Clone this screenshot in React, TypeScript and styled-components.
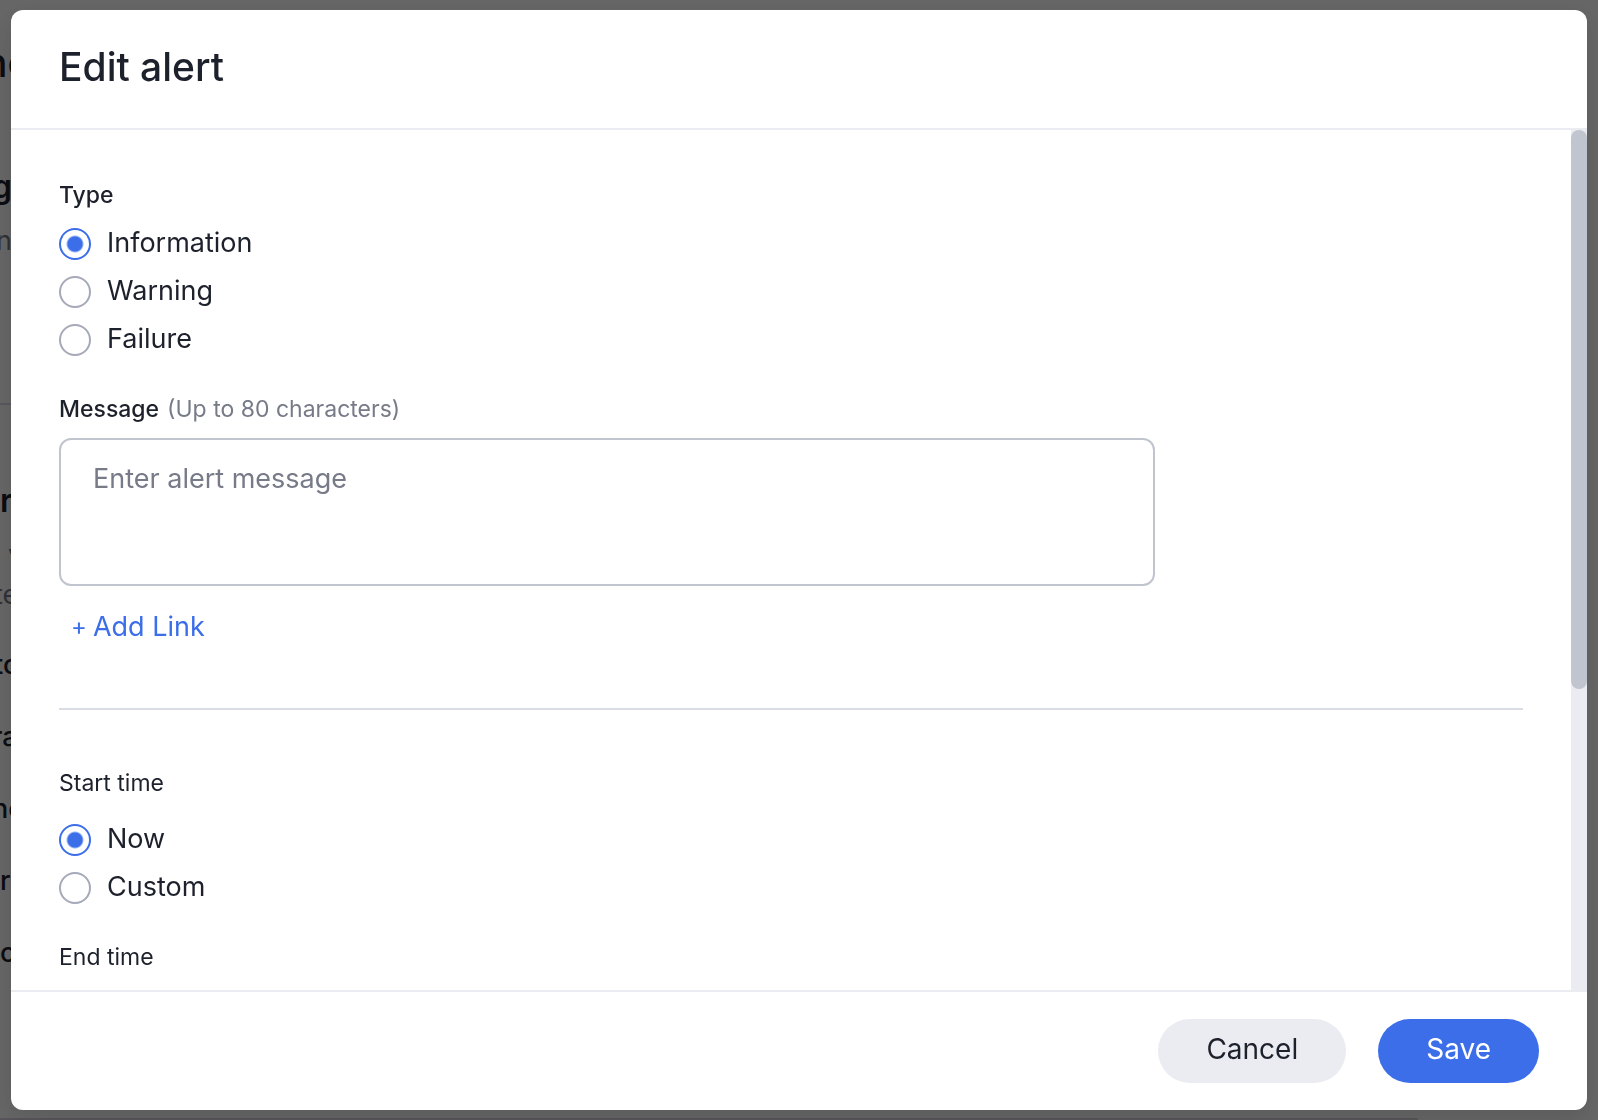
import React, { useState } from "react";
import styled, { createGlobalStyle } from "styled-components";

const ink = "#1d212c";
const muted = "#777b88";
const blue = "#3b6ee8";
const mist = "#ebecf2";

const GlobalStyle = createGlobalStyle`
  *, *::before, *::after { box-sizing: border-box; }
  body { margin: 0; overflow: hidden; }
  body, button, input, textarea {
    font-family: Inter, "Liberation Sans", sans-serif;
    color: ${ink};
  }
`;

/* ---- page behind the dialog ---- */

const Page = styled.main`
  display: flex;
  flex-direction: column;
  height: 100vh;
  overflow: hidden;
  background: #fff;
`;

const PageSection = styled.section`
  padding-top: 39px;
  padding-bottom: 142px;
`;

const RuledSection = styled.section`
  margin-right: 180px;
  padding-top: 76px;
  border-top: 2px solid #dadde6;
`;

const PageTitle = styled.div`
  font-size: 39px;
  font-weight: 500;
  line-height: 48px;
  text-indent: -16px;
  margin-bottom: 80px;
`;

const PageHeading = styled.div<{ $indent?: number }>`
  font-size: 32px;
  font-weight: 600;
  line-height: 40px;
  text-indent: ${(p) => p.$indent ?? 0}px;
  margin-bottom: 14px;
`;

const PageText = styled.div<{ $indent?: number }>`
  font-size: 27px;
  line-height: 40px;
  color: ${muted};
  text-indent: ${(p) => p.$indent ?? 0}px;
`;

const PageList = styled.div`
  padding-top: 14px;
`;

const PageItem = styled.div<{ $indent?: number }>`
  font-size: 27px;
  font-weight: 500;
  line-height: 72px;
  text-indent: ${(p) => p.$indent ?? 0}px;
`;

const PageFooter = styled.div`
  height: 2px;
  margin-top: auto;
  margin-right: 180px;
  background: #d9d4de;
`;

/* ---- dialog ---- */

const Overlay = styled.div`
  position: fixed;
  inset: 0;
  display: flex;
  padding: 10px 11px;
  background: rgba(0, 0, 0, 0.6);
`;

const Dialog = styled.form`
  flex: 1;
  min-width: 0;
  display: flex;
  flex-direction: column;
  overflow: hidden;
  border-radius: 12px;
  background: #fff;
  box-shadow: 0 8px 24px rgba(0, 0, 0, 0.12);
`;

const Header = styled.header`
  padding: 33px 48px 37px;
  border-bottom: 2px solid ${mist};
`;

const Title = styled.h1`
  margin: 0;
  font-size: 39px;
  font-weight: 500;
  line-height: 48px;
`;

const Body = styled.div`
  flex: 1;
  min-height: 0;
  display: flex;
`;

const Content = styled.div`
  flex: 1;
  min-width: 0;
  overflow-y: auto;
  scrollbar-width: none;
  padding: 48px;
`;

const Track = styled.div`
  width: 16px;
  background: ${mist};
`;

const Thumb = styled.div`
  height: 65%;
  border-radius: 8px;
  background: #c1c5cf;
`;

const Group = styled.fieldset<{ $gap: number }>`
  display: flex;
  flex-direction: column;
  gap: 16px;
  margin: 0 0 36px;
  padding: 0;
  border: 0;
  min-width: 0;

  legend {
    margin-bottom: ${(p) => p.$gap}px;
  }
`;

const Legend = styled.legend<{ $strong?: boolean }>`
  padding: 0;
  font-size: 23px;
  font-weight: ${(p) => (p.$strong ? 500 : 400)};
  line-height: 34px;
`;

const Option = styled.label`
  display: flex;
  align-items: flex-start;
  gap: 16px;
  height: 32px;
  font-size: 27px;
  line-height: 30px;
`;

const Radio = styled.input.attrs({ type: "radio" })`
  appearance: none;
  flex: none;
  width: 32px;
  height: 32px;
  margin: 0;
  border: 2px solid #a5a9b8;
  border-radius: 50%;
  background: #fff;

  &:checked {
    border-color: ${blue};
    background: radial-gradient(circle, ${blue} 7px, #fff 9px);
  }
`;

const MessageLabel = styled.label`
  display: flex;
  gap: 8px;
  margin-bottom: 12px;
  font-size: 23px;
  font-weight: 500;
  line-height: 34px;
`;

const Hint = styled.span`
  font-weight: 400;
  color: ${muted};
`;

const Message = styled.textarea`
  display: block;
  width: 100%;
  max-width: 1096px;
  height: 148px;
  padding: 20px 32px;
  border: 2px solid #c0c4cf;
  border-radius: 12px;
  resize: none;
  outline: none;
  font-size: 27px;
  line-height: 38px;

  &::placeholder {
    color: ${muted};
    opacity: 1;
  }
`;

const AddLink = styled.button`
  display: flex;
  gap: 6px;
  margin: 22px 0 62px;
  padding: 0 12px;
  border: 0;
  background: none;
  color: ${blue};
  font-size: 27px;
  line-height: 38px;
`;

const Plus = styled.span`
  font-size: 24px;
`;

const Divider = styled.hr`
  height: 2px;
  margin: 0 0 56px;
  border: 0;
  background: #dadde4;
`;

const Footer = styled.footer`
  display: flex;
  justify-content: flex-end;
  gap: 32px;
  padding: 27px 48px;
  border-top: 2px solid ${mist};
`;

const Button = styled.button<{ $primary?: boolean }>`
  height: 64px;
  padding: 0 48px 4px;
  border: 0;
  border-radius: 32px;
  background: ${(p) => (p.$primary ? blue : mist)};
  color: ${(p) => (p.$primary ? "#fff" : ink)};
  font-size: 28px;
`;

type RadioGroupProps = {
  name: string;
  label: string;
  options: string[];
  gap: number;
  strong?: boolean;
};

function RadioGroup({ name, label, options, gap, strong }: RadioGroupProps) {
  const [value, setValue] = useState(options[0]);
  return (
    <Group $gap={gap}>
      <Legend $strong={strong}>{label}</Legend>
      {options.map((option) => (
        <Option key={option}>
          <Radio name={name} value={option} checked={value === option} onChange={() => setValue(option)} />
          {option}
        </Option>
      ))}
    </Group>
  );
}

export default function App() {
  return (
    <>
      <GlobalStyle />
      <Page aria-hidden="true">
        <PageSection>
          <PageTitle>nc</PageTitle>
          <PageHeading $indent={-8}>g</PageHeading>
          <PageText $indent={-4}>n</PageText>
        </PageSection>
        <RuledSection>
          <PageHeading>r</PageHeading>
          <PageText $indent={8}>v</PageText>
          <PageText $indent={-6}>te</PageText>
          <PageList>
            <PageItem $indent={-6}>to</PageItem>
            <PageItem $indent={-8}>ra</PageItem>
            <PageItem $indent={-8}>ne</PageItem>
            <PageItem>r</PageItem>
            <PageItem>o</PageItem>
          </PageList>
        </RuledSection>
        <PageFooter />
      </Page>
      <Overlay>
        <Dialog role="dialog" aria-modal="true" aria-labelledby="dialog-title" onSubmit={(e) => e.preventDefault()}>
          <Header>
            <Title id="dialog-title">Edit alert</Title>
          </Header>
          <Body>
            <Content>
              <RadioGroup name="type" label="Type" options={["Information", "Warning", "Failure"]} gap={16} strong />
              <MessageLabel htmlFor="message">
                Message <Hint>(Up to 80 characters)</Hint>
              </MessageLabel>
              <Message id="message" maxLength={80} placeholder="Enter alert message" />
              <AddLink type="button">
                <Plus>+</Plus>
                Add Link
              </AddLink>
              <Divider />
              <RadioGroup name="start" label="Start time" options={["Now", "Custom"]} gap={24} />
              <RadioGroup name="end" label="End time" options={[]} gap={24} />
            </Content>
            <Track>
              <Thumb />
            </Track>
          </Body>
          <Footer>
            <Button type="button">Cancel</Button>
            <Button type="submit" $primary>
              Save
            </Button>
          </Footer>
        </Dialog>
      </Overlay>
    </>
  );
}
